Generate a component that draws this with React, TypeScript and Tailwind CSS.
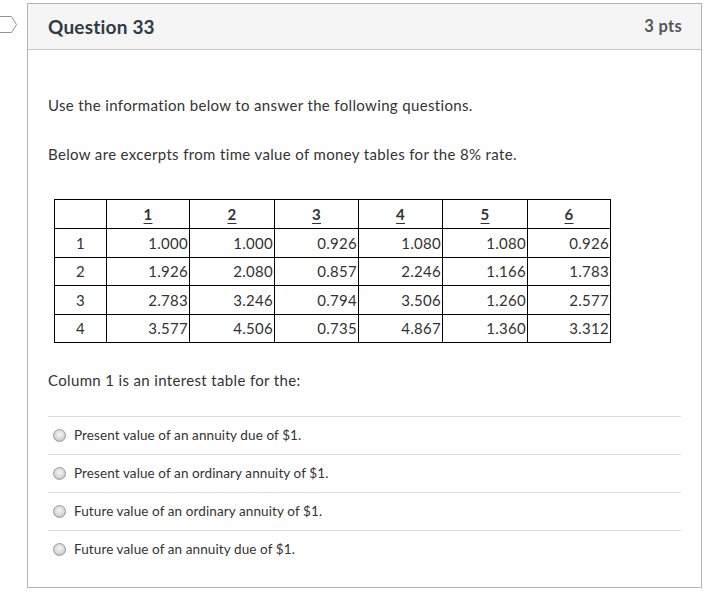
import React from 'react';

const headers = ['1', '2', '3', '4', '5', '6'];

const rows = [
  ['1.000', '1.000', '0.926', '1.080', '1.080', '0.926'],
  ['1.926', '2.080', '0.857', '2.246', '1.166', '1.783'],
  ['2.783', '3.246', '0.794', '3.506', '1.260', '2.577'],
  ['3.577', '4.506', '0.735', '4.867', '1.360', '3.312'],
];

const answers = [
  'Present value of an annuity due of $1.',
  'Present value of an ordinary annuity of $1.',
  'Future value of an ordinary annuity of $1.',
  'Future value of an annuity due of $1.',
];

const colWidths = ['w-[52px]', 'w-[83px]', 'w-[85px]', 'w-[84px]', 'w-[84px]', 'w-[85px]', 'w-[83px]'];

function Radio() {
  return (
    <span className="inline-block w-[13px] h-[13px] rounded-full border border-[#9a9a9a] bg-[radial-gradient(circle_at_50%_40%,#f5f5f5_0%,#d8d8d8_55%,#b0b0b0_100%)] shrink-0" />
  );
}

export default function App() {
  return (
    <div className="bg-white w-[728px] h-[600px] flex items-start text-[#2d3b45]" style={{ fontFamily: 'Lato, "Open Sans", sans-serif' }}>
      {/* question flag tab */}
      <svg width="18" height="19" viewBox="0 0 18 19" className="mt-[15px] shrink-0">
        <path d="M-1 1.5 H11.5 L16.5 9.5 L11.5 17.5 H-1" fill="none" stroke="#8a96a0" strokeWidth="1" />
      </svg>

      <div className="ml-[9px] mt-[3px] w-[675px] border border-[#b3b3b3] bg-white">
        <div className="h-[46px] bg-[#f5f5f5] border-b border-[#c4c4c4] flex items-center justify-between pl-[20px] pr-[19px]">
          <h2 className="text-[19px] font-bold text-[#2d3b45] tracking-[0.2px] mt-[1px]">Question 33</h2>
          <span className="text-[16.5px] font-bold text-[#555] tracking-[0.3px]">3 pts</span>
        </div>

        <div className="px-[20px] pt-[45px] pb-[19px] text-[15px] tracking-[0.35px] text-[#333]">
          <p className="leading-[20px]">Use the information below to answer the following questions.</p>
          <p className="leading-[20px] mt-[29px]">Below are excerpts from time value of money tables for the 8% rate.</p>

          <table className="mt-[35px] ml-[6px] border-collapse text-[15px] tracking-[0.3px] text-[#333]">
            <thead>
              <tr className="h-[29px]">
                <th className={`${colWidths[0]} border border-black`} />
                {headers.map((h, i) => (
                  <th key={h} className={`${colWidths[i + 1]} border border-black font-bold underline underline-offset-[3px] text-center`}>
                    {h}
                  </th>
                ))}
              </tr>
            </thead>
            <tbody>
              {rows.map((r, ri) => (
                <tr key={ri} className="h-[28.5px]">
                  <td className="border border-black text-center">{ri + 1}</td>
                  {r.map((v, ci) => (
                    <td key={ci} className="border border-black text-right pr-[1px]">
                      {v}
                    </td>
                  ))}
                </tr>
              ))}
            </tbody>
          </table>

          <p className="leading-[20px] mt-[27px]">Column 1 is an interest table for the:</p>

          <div className="mt-[26px]">
            {answers.map((a) => (
              <div key={a} className="h-[38px] border-t border-[#dcdcdc] flex items-center pl-[5px] gap-[8px] text-[13.5px] tracking-[0.1px]">
                <Radio />
                <span>{a}</span>
              </div>
            ))}
          </div>
        </div>
      </div>
    </div>
  );
}
